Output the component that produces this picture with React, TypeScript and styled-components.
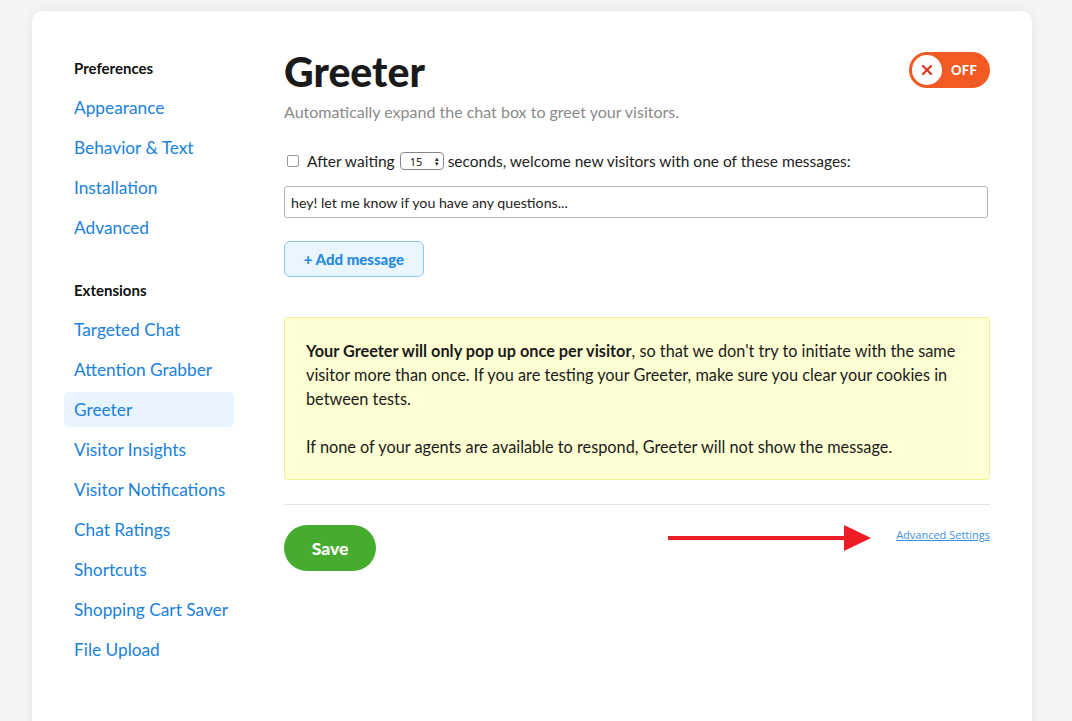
import React from "react";
import styled, { createGlobalStyle } from "styled-components";

const Global = createGlobalStyle`
  html, body { margin: 0; padding: 0; background: #f4f4f4; }
  body { font-family: Lato, "Noto Sans", sans-serif; color: #1d1d1d; }
  * { box-sizing: border-box; }
`;

const Page = styled.div`
  padding: 11px 40px 0 32px;
  height: 721px;
  overflow: hidden;
`;

const Card = styled.div`
  background: #fff;
  border-radius: 10px;
  box-shadow: 0 0 12px rgba(0, 0, 0, 0.06);
  display: flex;
  padding: 47px 42px 60px 32px;
  min-height: 760px;
`;

const Sidebar = styled.nav`
  width: 202px;
  flex-shrink: 0;
  display: flex;
  flex-direction: column;
`;

const NavHeading = styled.div<{ $gap?: number }>`
  font-weight: 700;
  font-size: 15px;
  color: #111;
  padding-left: 10px;
  height: 20px;
  line-height: 20px;
  margin-top: ${(p) => p.$gap ?? 0}px;
  margin-bottom: ${(p) => (p.$gap ? 12 : 12)}px;
`;

const NavItem = styled.a<{ $active?: boolean }>`
  display: flex;
  align-items: center;
  width: 170px;
  height: 35px;
  margin-bottom: 5px;
  padding-left: 10px;
  border-radius: 5px;
  font-size: 17.3px;
  color: #1a81dd;
  text-decoration: none;
  background: ${(p) => (p.$active ? "#e8f4ff" : "transparent")};
`;

const Main = styled.main`
  flex: 1;
  display: flex;
  flex-direction: column;
  padding-left: 18px;
`;

const Header = styled.div`
  display: flex;
  justify-content: space-between;
  align-items: flex-start;
`;

const Title = styled.h1`
  margin: 0;
  font-size: 41px;
  font-weight: 900;
  line-height: 46px;
  color: #1a1a1a;
  margin-top: -9px;
`;

const Toggle = styled.div`
  display: flex;
  align-items: center;
  width: 81px;
  height: 36px;
  border-radius: 18px;
  background: #f15a22;
  padding: 0 0 0 3px;
  gap: 9px;
  margin-top: -6px;
`;

const ToggleKnob = styled.span`
  width: 30px;
  height: 30px;
  border-radius: 50%;
  background: #fff;
  display: flex;
  align-items: center;
  justify-content: center;
`;

const ToggleLabel = styled.span`
  color: #fff;
  font-weight: 900;
  font-size: 13px;
  letter-spacing: 0.3px;
`;

const Subtitle = styled.p`
  margin: 7px 0 0;
  font-size: 16px;
  color: #8a8a8a;
  line-height: 20px;
`;

const CheckRow = styled.label`
  display: flex;
  align-items: center;
  margin-top: 29px;
  font-size: 15.5px;
  color: #222;
  gap: 5px;
  height: 20px;
`;

const Check = styled.span`
  width: 12px;
  height: 12px;
  border: 1px solid #9a9a9a;
  border-radius: 2px;
  margin: 0 3px 0 3px;
`;

const NumberBox = styled.span`
  display: inline-flex;
  align-items: center;
  justify-content: space-between;
  width: 44px;
  height: 18px;
  border: 1px solid #888;
  border-radius: 4px;
  font-size: 11px;
  padding: 0 4px 0 9px;
  font-family: "Noto Sans", sans-serif;
  margin: 0 -1px 0 0;
`;

const Arrows = styled.span`
  font-size: 7px;
  line-height: 5px;
  display: flex;
  flex-direction: column;
  color: #222;
`;

const MessageInput = styled.div`
  margin-top: 15px;
  width: 704px;
  height: 32px;
  border: 1px solid #b5b5b5;
  border-radius: 3px;
  display: flex;
  align-items: center;
  padding-left: 6px;
  font-size: 14.2px;
  color: #222;
`;

const AddButton = styled.button`
  margin-top: 23px;
  align-self: flex-start;
  width: 140px;
  height: 36px;
  border: 1px solid #8cc4f5;
  border-radius: 6px;
  background: #e9f5ff;
  color: #2a8ae0;
  font-family: Lato, sans-serif;
  font-weight: 900;
  font-size: 15px;
`;

const Notice = styled.div`
  margin-top: 40px;
  width: 706px;
  background: #ffffd4;
  border: 1px solid #f2ef9c;
  border-radius: 3px;
  padding: 21px 28px 20px 21px;
  font-size: 16.3px;
  line-height: 24px;
  color: #1a1a1a;
`;

const NoticePara = styled.p`
  margin: 0 0 24px;
  &:last-child { margin-bottom: 0; }
`;

const Divider = styled.hr`
  margin: 24px 0 0;
  width: 706px;
  border: none;
  border-top: 1px solid #e4e4e4;
`;

const Footer = styled.div`
  display: flex;
  align-items: flex-start;
  width: 706px;
  margin-top: 20px;
`;

const SaveButton = styled.button`
  width: 92px;
  height: 46px;
  border: none;
  border-radius: 23px;
  background: #46ac2f;
  color: #fff;
  font-family: Lato, sans-serif;
  font-weight: 900;
  font-size: 17.5px;
`;

const ArrowWrap = styled.div`
  margin-left: auto;
  margin-top: 0px;
  display: flex;
`;

const AdvancedLink = styled.a`
  margin-left: 25px;
  margin-top: 2px;
  font-family: "Open Sans", sans-serif;
  font-size: 11px;
  color: #3d8fe0;
  text-decoration: underline;
`;

const prefs = ["Appearance", "Behavior & Text", "Installation", "Advanced"];
const exts = [
  "Targeted Chat",
  "Attention Grabber",
  "Greeter",
  "Visitor Insights",
  "Visitor Notifications",
  "Chat Ratings",
  "Shortcuts",
  "Shopping Cart Saver",
  "File Upload",
];

export default function App() {
  return (
    <>
      <Global />
      <Page>
        <Card>
          <Sidebar>
            <NavHeading>Preferences</NavHeading>
            {prefs.map((p) => (
              <NavItem key={p}>{p}</NavItem>
            ))}
            <NavHeading $gap={30}>Extensions</NavHeading>
            {exts.map((e) => (
              <NavItem key={e} $active={e === "Greeter"}>
                {e}
              </NavItem>
            ))}
          </Sidebar>
          <Main>
            <Header>
              <Title>Greeter</Title>
              <Toggle>
                <ToggleKnob>
                  <svg width="12" height="12" viewBox="0 0 12 12">
                    <path d="M2 2 L10 10 M10 2 L2 10" stroke="#e23b26" strokeWidth="2.4" strokeLinecap="round" />
                  </svg>
                </ToggleKnob>
                <ToggleLabel>OFF</ToggleLabel>
              </Toggle>
            </Header>
            <Subtitle>Automatically expand the chat box to greet your visitors.</Subtitle>
            <CheckRow>
              <Check />
              After waiting
              <NumberBox>
                15
                <Arrows>
                  <span>▴</span>
                  <span>▾</span>
                </Arrows>
              </NumberBox>
              seconds, welcome new visitors with one of these messages:
            </CheckRow>
            <MessageInput>hey! let me know if you have any questions...</MessageInput>
            <AddButton>+ Add message</AddButton>
            <Notice>
              <NoticePara>
                <b>Your Greeter will only pop up once per visitor</b>, so that we don't try to initiate with the same
                visitor more than once. If you are testing your Greeter, make sure you clear your cookies in between
                tests.
              </NoticePara>
              <NoticePara>If none of your agents are available to respond, Greeter will not show the message.</NoticePara>
            </Notice>
            <Divider />
            <Footer>
              <SaveButton>Save</SaveButton>
              <ArrowWrap>
                <svg width="203" height="26" viewBox="0 0 203 26">
                  <rect x="0" y="11" width="180" height="4" fill="#ee1c24" />
                  <polygon points="176,0 203,13 176,26" fill="#ee1c24" />
                </svg>
              </ArrowWrap>
              <AdvancedLink>Advanced Settings</AdvancedLink>
            </Footer>
          </Main>
        </Card>
      </Page>
    </>
  );
}
